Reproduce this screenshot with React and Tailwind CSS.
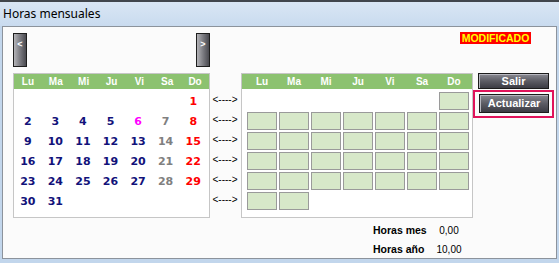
import React from "react";

const days = ["Lu", "Ma", "Mi", "Ju", "Vi", "Sa", "Do"];

// semanas del mes: null = hueco
const weeks = [
  [null, null, null, null, null, null, 1],
  [2, 3, 4, 5, 6, 7, 8],
  [9, 10, 11, 12, 13, 14, 15],
  [16, 17, 18, 19, 20, 21, 22],
  [23, 24, 25, 26, 27, 28, 29],
  [30, 31, null, null, null, null, null],
];

const dayColor = (d, col) => {
  if (d === 6) return "text-[#ff00ff]";
  if (col === 6) return "text-[#ff0000]";
  if (col === 5) return "text-[#808080]";
  return "text-[#12127a]";
};

const NavButton = ({ label }) => (
  <div className="w-[14px] h-[34px] border border-[#1e1e1e] bg-gradient-to-r from-[#b4b4b8] via-[#7c7c82] to-[#4a4a50] flex justify-center pt-[6px]">
    <span className="text-white text-[9px] font-bold leading-none">{label}</span>
  </div>
);

const DarkButton = ({ label, className }) => (
  <div
    className={`border border-[#1c1c1c] bg-gradient-to-b from-[#8a8a92] via-[#5c5c64] to-[#3c3c44] shadow-[inset_1px_1px_0_#b8b8c0] flex items-center justify-center text-white text-[11px] font-bold leading-none ${className}`}
  >
    {label}
  </div>
);

const App = () => {
  return (
    <div
      className="w-[559px] h-[263px] bg-[#c2d6ec] flex flex-col overflow-hidden"
      style={{ fontFamily: '"Liberation Sans", Arial, sans-serif' }}
    >
      <div className="h-[2px] bg-[#41464c]" />
      {/* Title bar */}
      <div className="h-[24px] bg-gradient-to-b from-[#d9e6f4] to-[#c9dbef] flex items-center px-[3px]">
        <span
          className="text-[12px] text-black leading-none"
          style={{ fontFamily: '"Noto Sans", "Open Sans", sans-serif' }}
        >
          Horas mensuales
        </span>
      </div>

      {/* Client area */}
      <div className="mx-[2px] h-[233px] border border-[#8c939c] bg-[#fbfbfb] flex flex-col">
        {/* Navigation */}
        <div className="flex items-start mt-[6px] h-[34px]">
          <div className="ml-[10px]">
            <NavButton label="<" />
          </div>
          <div className="ml-[169px]">
            <NavButton label=">" />
          </div>
          <div className="ml-[250px] -mt-[1px] h-[12px] w-[71px] bg-[#ff0000] flex items-center justify-center">
            <span className="text-[#ffff00] text-[10.5px] font-bold leading-none">MODIFICADO</span>
          </div>
        </div>

        {/* Calendars */}
        <div className="flex items-start mt-[6px]">
          {/* Left calendar */}
          <div className="ml-[10px] w-[197px] h-[145px] border border-[#c6c6c6] bg-white">
            <div className="h-[15px] bg-[#8cc270] grid grid-cols-7 items-center">
              {days.map((d) => (
                <span key={d} className="text-center text-white text-[10px] font-bold leading-none">
                  {d}
                </span>
              ))}
            </div>
            <div className="mt-[2px] pr-[2px]">
              {weeks.map((w, i) => (
                <div key={i} className="grid grid-cols-7 h-[20px] items-center">
                  {w.map((d, j) => (
                    <span
                      key={j}
                      className={`text-center text-[11px] font-bold leading-none ${dayColor(d, j)}`}
                      style={{ fontFamily: '"DejaVu Sans", Verdana, sans-serif' }}
                    >
                      {d ?? ""}
                    </span>
                  ))}
                </div>
              ))}
            </div>
          </div>

          {/* Arrows */}
          <div className="ml-[2px] w-[26px] pt-[17px]">
            {weeks.map((_, i) => (
              <div key={i} className="h-[20px] flex items-center justify-center text-[10px] text-black leading-none">
                {"<---->"}
              </div>
            ))}
          </div>

          {/* Right calendar */}
          <div className="ml-[3px] w-[232px] h-[145px] border border-[#c6c6c6] bg-white">
            <div className="h-[15px] bg-[#8cc270] grid grid-cols-[repeat(7,30px)] gap-x-[2px] pl-[5px] items-center">
              {days.map((d) => (
                <span key={d} className="text-center text-white text-[10px] font-bold leading-none">
                  {d}
                </span>
              ))}
            </div>
            <div className="pt-[3px] pl-[5px] grid grid-cols-[repeat(7,30px)] auto-rows-[18px] gap-[2px]">
              {weeks.flatMap((w, i) =>
                w.map((d, j) => (
                  <div
                    key={`${i}-${j}`}
                    className={d ? "bg-[#d7e8c9] border border-[#9a9a9a]" : ""}
                  />
                ))
              )}
            </div>
          </div>

          {/* Buttons */}
          <div className="w-[81px] flex flex-col">
            <DarkButton label="Salir" className="ml-[5px] w-[71px] h-[16px]" />
            <div className="mt-[1px] h-[28px] border-2 border-[#e0135a] pl-[4px] pt-[2px]">
              <DarkButton label="Actualizar" className="w-[70px] h-[19px]" />
            </div>
          </div>
        </div>

        {/* Totals */}
        <div className="mt-[3px] ml-[370px] flex flex-col">
          <div className="h-[19px] flex items-center">
            <span className="w-[61px] text-[10.5px] font-bold text-black">Horas mes</span>
            <span className="w-[30px] text-center text-[10px] text-black">0,00</span>
          </div>
          <div className="h-[19px] flex items-center">
            <span className="w-[61px] text-[10.5px] font-bold text-black">Horas año</span>
            <span className="w-[30px] text-center text-[10px] text-black">10,00</span>
          </div>
        </div>
      </div>
    </div>
  );
};

export default App;
